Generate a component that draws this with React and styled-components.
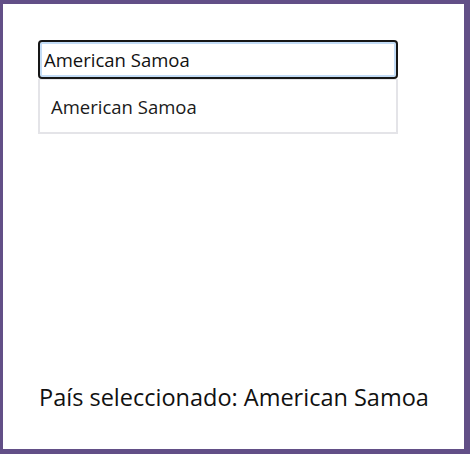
import React, { useState } from 'react';
import styled, { createGlobalStyle } from 'styled-components';

const GlobalStyle = createGlobalStyle`
html, body {
  margin: 0;
  padding: 0;
  background: #ffffff;
}
* { box-sizing: border-box; }
`

const Frame = styled.div`
width: 470px;
height: 454px;
border-style: solid;
border-color: #624f87;
border-width: 4px 6px 5px 3px;
background: #ffffff;
display: flex;
flex-direction: column;
padding: 36px 0 0 35px;
font-family: "Open Sans", "Noto Sans", sans-serif;
color: #111111;
`

const Combo = styled.div`
width: 360px;
display: flex;
flex-direction: column;
`

const Input = styled.input`
width: 100%;
height: 39px;
border: 2px solid #161616;
border-radius: 4px;
box-shadow: inset 0 0 0 2px #c3dcf6;
padding: 0 4px;
font-family: inherit;
font-size: 18.5px;
color: #111111;
outline: none;
caret-color: #000;
`

const List = styled.ul`
list-style: none;
margin: 0;
padding: 0;
border: 2px solid #e4e4e8;
border-top-width: 1px;
`

const Option = styled.li`
height: 52px;
display: flex;
align-items: center;
padding: 0 11px;
font-size: 18.5px;
color: #1a1a1a;
`

const Result = styled.p`
margin: auto 0 36px 1px;
font-size: 23.5px;
color: #111111;
`

export default function App() {
  const [value, setValue] = useState('American Samoa');
  return (
    <>
      <GlobalStyle />
      <Frame>
        <Combo>
          <Input value={value} onChange={e => setValue(e.target.value)} autoFocus />
          <List>
            <Option>American Samoa</Option>
          </List>
        </Combo>
        <Result>País seleccionado: American Samoa</Result>
      </Frame>
    </>
  );
}
